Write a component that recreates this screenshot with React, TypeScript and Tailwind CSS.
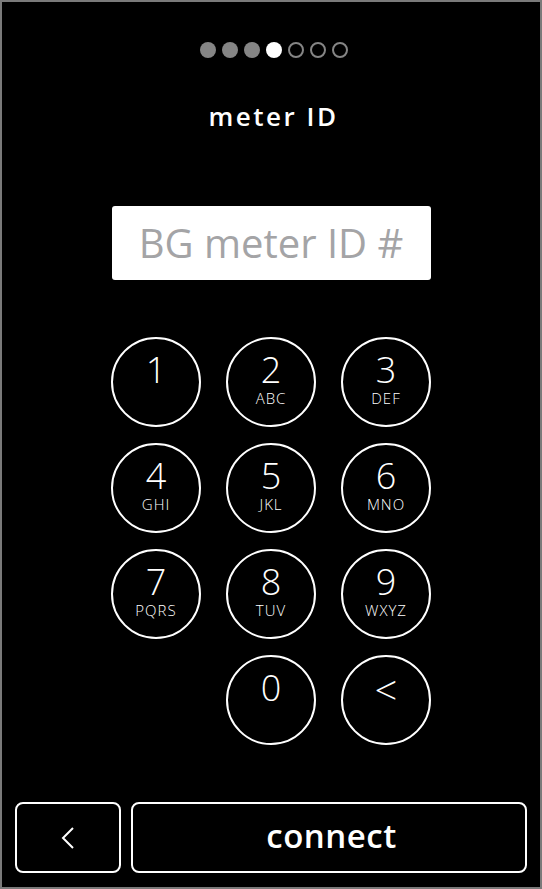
import React from "react";

const keys: { d: string; l: string }[] = [
  { d: "1", l: "" },
  { d: "2", l: "ABC" },
  { d: "3", l: "DEF" },
  { d: "4", l: "GHI" },
  { d: "5", l: "JKL" },
  { d: "6", l: "MNO" },
  { d: "7", l: "PQRS" },
  { d: "8", l: "TUV" },
  { d: "9", l: "WXYZ" },
];

function Key({ d, l }: { d: string; l: string }) {
  return (
    <div className="w-[90px] h-[90px] rounded-full border-2 border-white flex flex-col items-center pt-[14px] text-white">
      <div className="text-[36px] leading-[34px] font-light">{d}</div>
      <div className="mt-[4px] text-[15px] leading-[15px] font-light tracking-[1px] h-[15px]">{l}</div>
    </div>
  );
}

export default function App() {
  const dots = ["fill", "fill", "fill", "white", "ring", "ring", "ring"];
  return (
    <div
      className="w-[542px] h-[889px] bg-black border-2 border-[#7a7a7a] flex flex-col items-center"
      style={{ fontFamily: '"Open Sans", "Noto Sans", sans-serif' }}
    >
      <div className="mt-[40px] ml-[6px] flex gap-[6px]">
        {dots.map((t, i) => (
          <div
            key={i}
            className={
              t === "fill"
                ? "w-[16px] h-[16px] rounded-full bg-[#858585]"
                : t === "white"
                ? "w-[16px] h-[16px] rounded-full bg-white"
                : "w-[16px] h-[16px] rounded-full border-2 border-[#858585]"
            }
          />
        ))}
      </div>
      <div className="mt-[41px] text-white text-[26px] leading-[34px] font-semibold tracking-[2.5px] ml-[5px]">
        meter ID
      </div>
      <div className="mt-[73px] w-[319px] h-[74px] bg-white rounded-[3px] flex items-center justify-center">
        <span className="text-[#a4a4a6] text-[40px] leading-[46px] font-normal">BG meter ID #</span>
      </div>
      <div className="mt-[57px] grid grid-cols-[90px_90px_90px] gap-x-[25px] gap-y-[16px]">
        {keys.map((k) => (
          <Key key={k.d} d={k.d} l={k.l} />
        ))}
        <div />
        <Key d="0" l="" />
        <div className="w-[90px] h-[90px] rounded-full border-2 border-white flex flex-col items-center pt-[14px] text-white">
          <div className="text-[40px] leading-[38px] font-light">&lt;</div>
        </div>
      </div>
      <div className="mt-auto mb-[14px] w-full px-[13px] flex gap-[10px]">
        <div className="w-[106px] h-[71px] border-2 border-white rounded-[8px] flex items-center justify-center">
          <svg width="14" height="24" viewBox="0 0 14 24" fill="none">
            <polyline points="12,2 2,12 12,22" stroke="white" strokeWidth="2" strokeLinejoin="miter" />
          </svg>
        </div>
        <div className="flex-1 h-[71px] border-2 border-white rounded-[8px] flex items-center justify-center">
          <span className="text-white text-[33px] leading-[40px] font-semibold tracking-[0.5px] mb-[4px] ml-[5px]">connect</span>
        </div>
      </div>
    </div>
  );
}
